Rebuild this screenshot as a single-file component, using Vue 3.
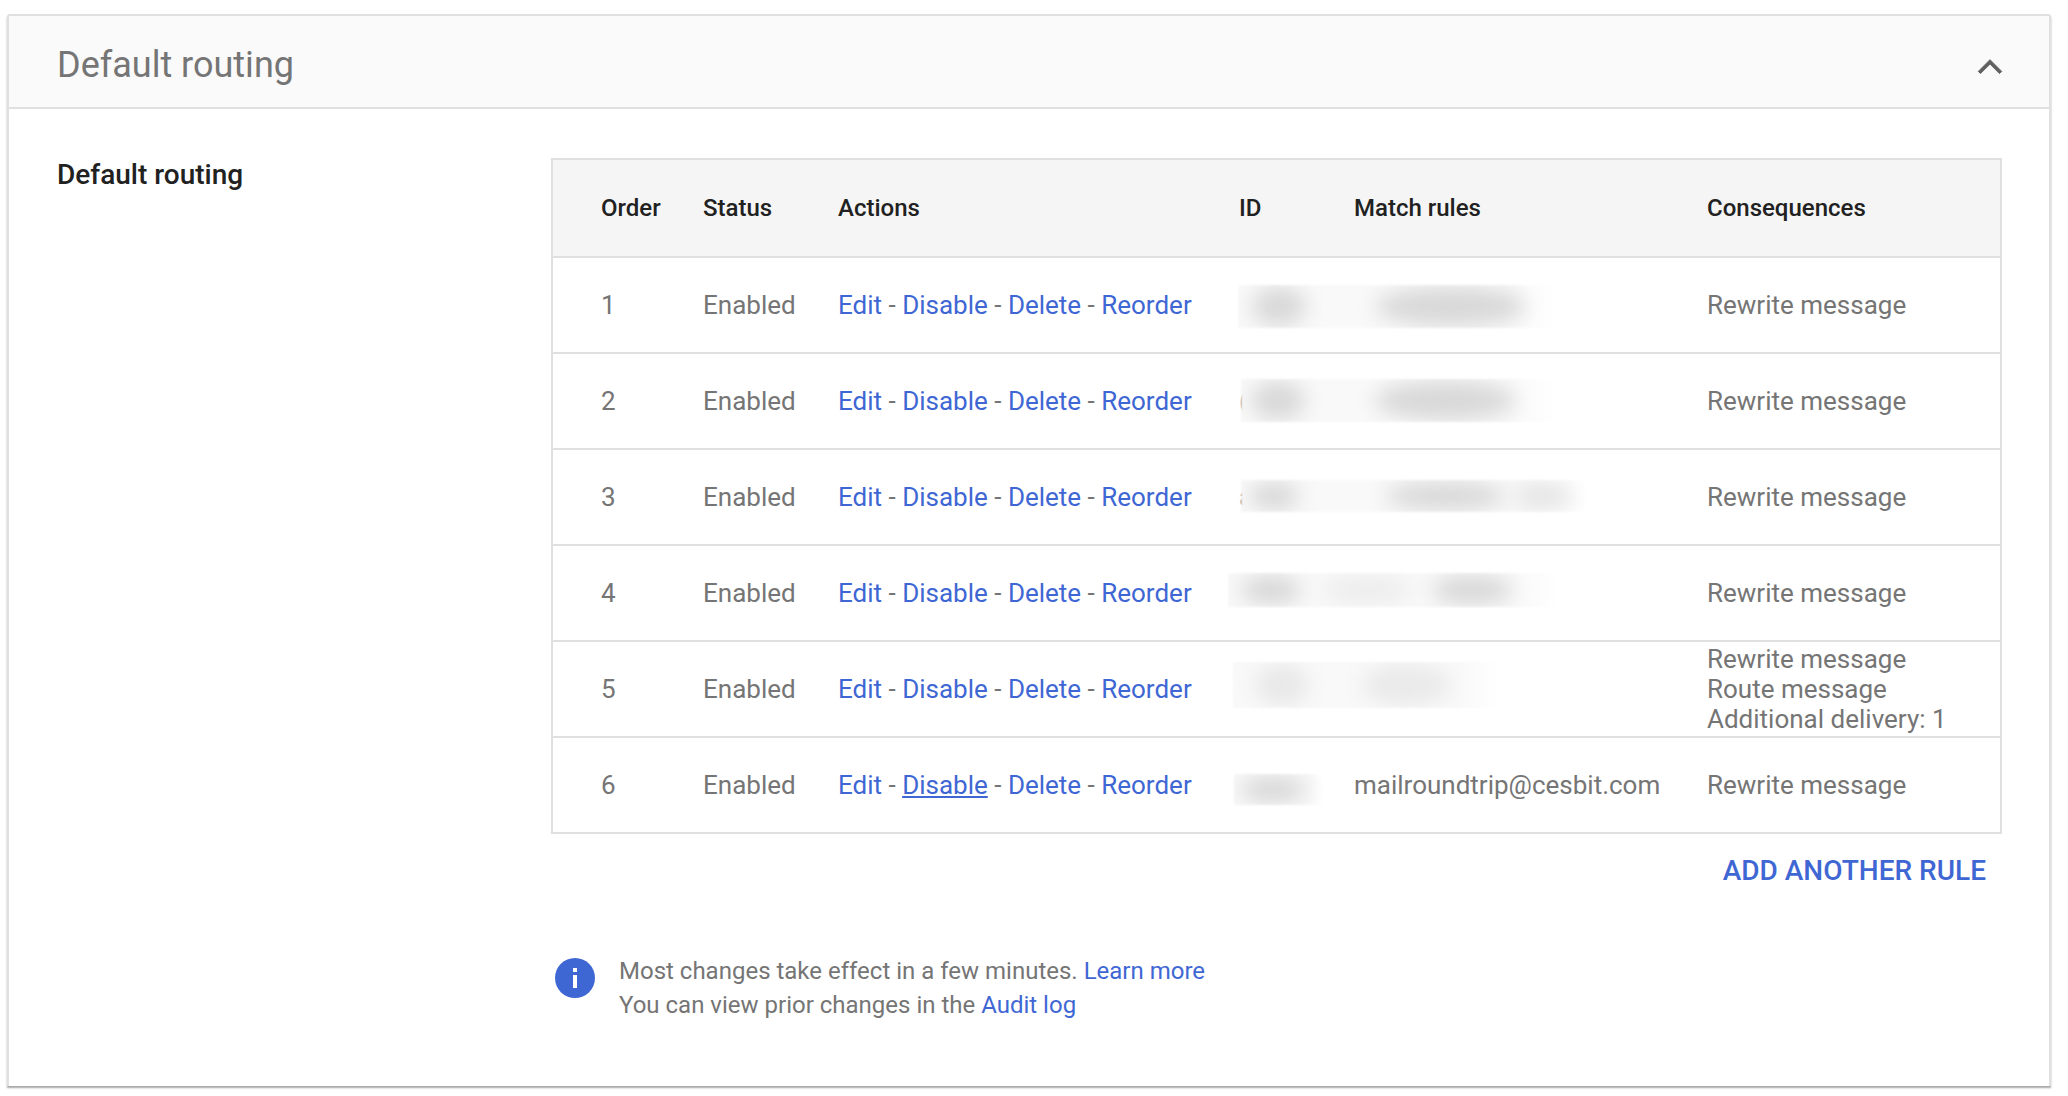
<script setup>
const rows = [
  { n: 1, cons: ['Rewrite message'], frag: '', box: { l: -1, w: 316, t: -20, h: 43 }, blobs: [[41, 54, 30], [213, 150, 1]] },
  { n: 2, cons: ['Rewrite message'], frag: '(', box: { l: 2, w: 313, t: -22, h: 43 }, blobs: [[37, 54, 30], [204, 140, 1]] },
  { n: 3, cons: ['Rewrite message'], frag: 'a', box: { l: 2, w: 344, t: -17, h: 32 }, blobs: [[33, 50, 30], [204, 120, 1], [303, 60, 0.6]] },
  { n: 4, cons: ['Rewrite message'], frag: '', box: { l: -11, w: 331, t: -20, h: 34 }, blobs: [[43, 60, 30], [244, 80, 1], [139, 90, 0.35]] },
  { n: 5, cons: ['Rewrite message', 'Route message', 'Additional delivery: 1'], frag: '', box: { l: -6, w: 265, t: -27, h: 46 }, blobs: [[49, 54, 30, 0.5], [173, 90, 0.45]] },
  { n: 6, cons: ['Rewrite message'], frag: '', box: { l: -5, w: 89, t: -11, h: 31 }, blobs: [[39, 66, 30]], email: 'mailroundtrip@cesbit.com' },
]
function boxStyle(b) {
  return { left: b.l + 'px', width: b.w + 'px', top: `calc(50% + ${b.t}px)`, height: b.h + 'px' }
}
function blobStyle(b) {
  const o = b.length > 3 ? b[3] : b.length > 2 && b[2] <= 1 ? b[2] : 1
  return { left: b[0] - b[1] / 2 + 'px', width: b[1] + 'px', opacity: o }
}
</script>

<template>
  <div class="page">
    <section class="card">
      <header class="head">
        <h1>Default routing</h1>
        <svg class="chev" viewBox="0 0 24 24" width="38" height="38"><path d="M12 8l-7.4 7.4 1.4 1.4 6-6 6 6 1.4-1.4z" fill="#616161" stroke="#616161" stroke-width=".6"/></svg>
      </header>
      <div class="body">
        <h2>Default routing</h2>
        <div class="main">
          <table>
            <colgroup>
              <col style="width:150px"><col style="width:135px"><col style="width:401px"><col style="width:115px"><col style="width:353px"><col>
            </colgroup>
            <thead>
              <tr><th class="first">Order</th><th>Status</th><th>Actions</th><th>ID</th><th>Match rules</th><th>Consequences</th></tr>
            </thead>
            <tbody>
              <tr v-for="r in rows" :key="r.n">
                <td class="first">{{ r.n }}</td>
                <td>Enabled</td>
                <td class="actions"><a>Edit</a> - <a :class="{ hov: r.n === 6 }">Disable</a> - <a>Delete</a> - <a>Reorder</a></td>
                <td class="id">
                  <span class="frag">{{ r.frag }}</span>
                  <div class="redact" :style="boxStyle(r.box)">
                    <i v-for="(b, i) in r.blobs" :key="i" :style="blobStyle(b)"></i>
                  </div>
                </td>
                <td>{{ r.email }}</td>
                <td><div v-for="c in r.cons" :key="c">{{ c }}</div></td>
              </tr>
            </tbody>
          </table>
          <div class="add"><a>ADD ANOTHER RULE</a></div>
          <div class="info">
            <svg viewBox="0 0 40 40" width="40" height="40"><circle cx="20" cy="20" r="20" fill="#3f67d4"/><rect x="18" y="17" width="4" height="13" fill="#fff"/><rect x="18" y="10" width="4" height="4" fill="#fff"/></svg>
            <p>Most changes take effect in a few minutes. <a>Learn more</a><br>You can view prior changes in the <a>Audit log</a></p>
          </div>
        </div>
      </div>
    </section>
  </div>
</template>

<style>
html, body { margin: 0; background: #fff; }
</style>

<style scoped>
.page { width: 2068px; height: 1096px; padding: 14px 17px 0 7px; box-sizing: border-box; font-family: Roboto, sans-serif; overflow: hidden; }
.card { height: 1072px; box-sizing: border-box; border: 2px solid #e0e0e0; border-bottom: 0; border-radius: 3px 3px 0 0; box-shadow: 0 2px 2px rgba(0,0,0,.35); background: #fff; }
.head { height: 93px; box-sizing: border-box; background: #fafafa; border-bottom: 2px solid #e0e0e0; display: flex; align-items: center; justify-content: space-between; padding: 0 40px 0 48px; }
h1 { margin: 0; font-size: 36px; font-weight: 400; color: #757575; position: relative; top: 3px; }
.chev { position: relative; top: 4px; }
.body { display: flex; padding: 49px 47px 0 48px; }
h2 { margin: 0; width: 494px; flex: none; font-size: 28px; font-weight: 500; color: #212121; line-height: 30px; padding-top: 2px; }
.main { flex: 1; min-width: 0; }
table { width: 100%; table-layout: fixed; border-collapse: separate; border-spacing: 0; border: 2px solid #e0e0e0; border-bottom: 0; font-size: 26px; color: #757575; }
th { height: 98px; box-sizing: border-box; background: #f5f5f5; font-weight: 500; color: #212121; text-align: left; padding: 0; border-bottom: 2px solid #e0e0e0; font-size: 24px; }
td { height: 96px; box-sizing: border-box; padding: 0; line-height: 30px; border-bottom: 2px solid #e0e0e0; white-space: nowrap; }
.first { padding-left: 48px; }
a { color: #3f67d4; }
.hov { text-decoration: underline; }
.id { position: relative; }
.frag { color: #757575; }
.redact { position: absolute; overflow: hidden; background: linear-gradient(90deg, #f9f9f9 0 85%, #fff); filter: blur(1px); }
.redact i { position: absolute; top: 2px; bottom: 2px; background: #d8d8d8; filter: blur(10px); border-radius: 50%; }
.add { text-align: right; padding: 19px 16px 0 0; font-size: 28px; font-weight: 500; line-height: 36px; }
.info { display: flex; align-items: flex-start; gap: 24px; margin-top: 65px; padding-left: 4px; }
.info svg { flex: none; margin-top: 4px; }
.info p { margin: 0; font-size: 24px; line-height: 34px; color: #757575; }
</style>
